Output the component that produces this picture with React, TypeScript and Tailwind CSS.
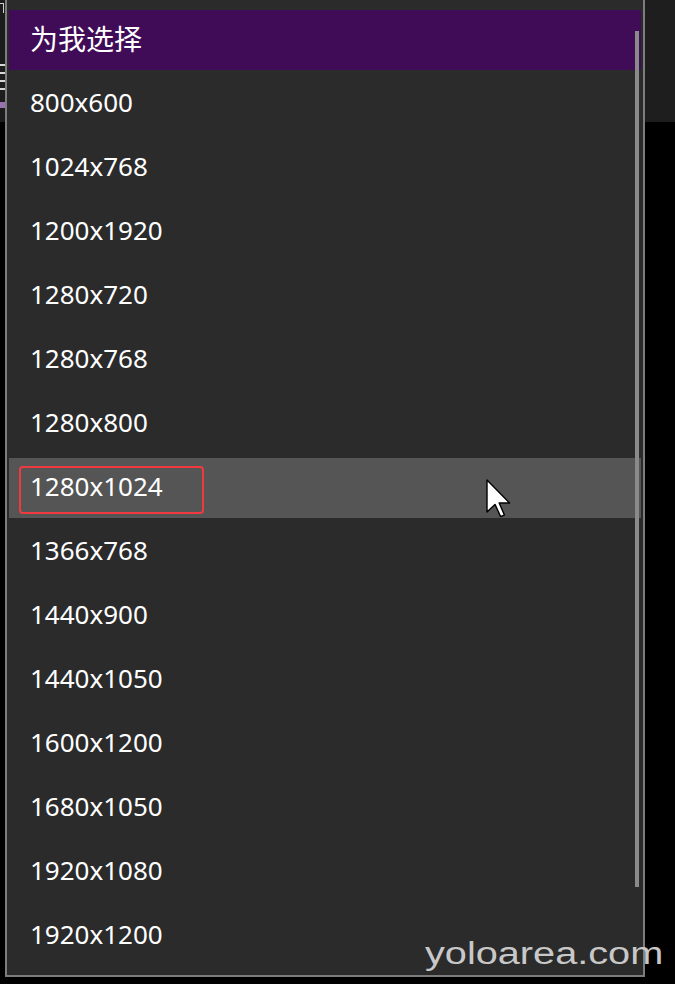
const sizes = [
  "800x600",
  "1024x768",
  "1200x1920",
  "1280x720",
  "1280x768",
  "1280x800",
  "1280x1024",
  "1366x768",
  "1440x900",
  "1440x1050",
  "1600x1200",
  "1680x1050",
  "1920x1080",
  "1920x1200",
];

const HOVERED = "1280x1024";

const Cursor = () => (
  <svg width="26" height="40" viewBox="0 0 13 20" className="absolute left-[486px] top-[479px]">
    <path
      d="M0.5 0.5 L0.5 16.5 L4.5 12.7 L7.3 18.8 L9.2 18 L6.6 12 L11.8 12 Z"
      fill="#ffffff"
      stroke="#000000"
      strokeWidth="0.7"
      strokeLinejoin="round"
    />
  </svg>
);

const App = () => {
  return (
    <div
      className="relative w-[675px] h-[984px] bg-black overflow-hidden flex"
      style={{ fontFamily: '"Noto Sans", "Noto Sans CJK SC", sans-serif' }}
    >
      {/* window behind, left edge */}
      <div className="w-[5px] flex flex-col">
        <div className="h-[122px] bg-[#1c1c1c] flex flex-col">
          <div className="h-[3px]" />
          <div className="h-[10px] w-[4px] border-r border-t border-[#cfcfcf]" />
          <div className="mt-[51px] flex flex-col gap-[6px]">
            <div className="h-[2px] w-[5px] bg-[#d8d8d8]" />
            <div className="h-[2px] w-[5px] bg-[#d8d8d8]" />
            <div className="h-[2px] w-[5px] bg-[#d8d8d8]" />
            <div className="h-[2px] w-[5px] bg-[#d8d8d8]" />
          </div>
          <div className="mt-[12px] h-[6px] w-[5px] bg-[#9a72b0]" />
        </div>
      </div>

      {/* dropdown */}
      <div className="relative w-[640px] h-[977px] bg-[#2b2b2b] border-l-2 border-r-2 border-b-2 border-[#7d7d7d]">
        <div className="flex flex-col gap-1 pt-[10px] px-[2px]">
          <div className="h-[60px] bg-[#400c58] flex items-center pl-[21px] text-[28px] text-white">
            <span className="-mt-[2px]">为我选择</span>
          </div>
          {sizes.map((size) => (
            <div
              key={size}
              className={`relative h-[60px] flex items-center pl-[21px] text-[26px] text-white ${
                size === HOVERED ? "bg-[#555555]" : ""
              }`}
            >
              <span className="-mt-[3px]">{size}</span>
              {size === HOVERED && (
                <div className="absolute left-[10px] top-[8px] w-[185px] h-[48px] border-2 border-[#f03a3f] rounded-[4px]" />
              )}
            </div>
          ))}
        </div>
        <div className="absolute right-[4px] top-[31px] w-[4px] h-[856px] bg-[#8a8a8a]" />
      </div>

      {/* window behind, right edge */}
      <div className="w-[30px] flex flex-col">
        <div className="h-[122px] bg-[#1e1e1e]" />
      </div>

      <Cursor />

      <div
        className="absolute left-[425px] top-[938px] text-[31px] leading-none text-[#c8c8c8] scale-x-[1.28] origin-left"
        style={{ fontFamily: '"Liberation Sans", Arial, sans-serif' }}
      >
        yoloarea.com
      </div>
    </div>
  );
};

export default App;
